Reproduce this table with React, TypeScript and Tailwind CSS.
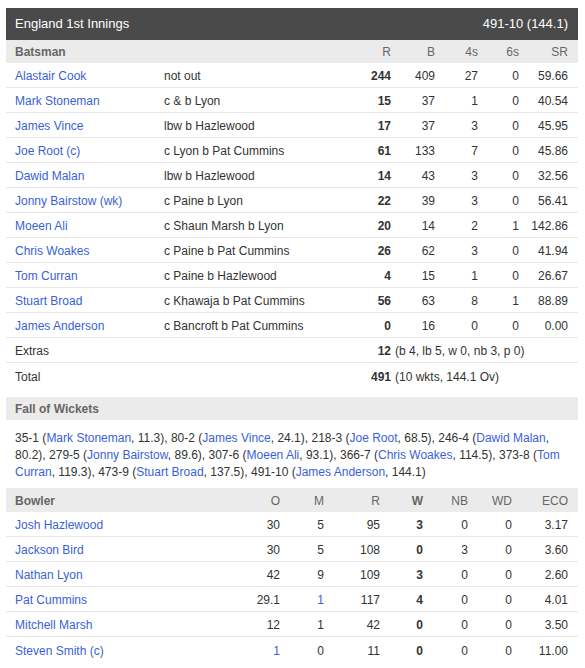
import React from "react";

const batsmen = [
  ["Alastair Cook", "not out", "244", "409", "27", "0", "59.66"],
  ["Mark Stoneman", "c & b Lyon", "15", "37", "1", "0", "40.54"],
  ["James Vince", "lbw b Hazlewood", "17", "37", "3", "0", "45.95"],
  ["Joe Root (c)", "c Lyon b Pat Cummins", "61", "133", "7", "0", "45.86"],
  ["Dawid Malan", "lbw b Hazlewood", "14", "43", "3", "0", "32.56"],
  ["Jonny Bairstow (wk)", "c Paine b Lyon", "22", "39", "3", "0", "56.41"],
  ["Moeen Ali", "c Shaun Marsh b Lyon", "20", "14", "2", "1", "142.86"],
  ["Chris Woakes", "c Paine b Pat Cummins", "26", "62", "3", "0", "41.94"],
  ["Tom Curran", "c Paine b Hazlewood", "4", "15", "1", "0", "26.67"],
  ["Stuart Broad", "c Khawaja b Pat Cummins", "56", "63", "8", "1", "88.89"],
  ["James Anderson", "c Bancroft b Pat Cummins", "0", "16", "0", "0", "0.00"],
];

const bowlers = [
  ["Josh Hazlewood", "30", "5", "95", "3", "0", "0", "3.17"],
  ["Jackson Bird", "30", "5", "108", "0", "3", "0", "3.60"],
  ["Nathan Lyon", "42", "9", "109", "3", "0", "0", "2.60"],
  ["Pat Cummins", "29.1", "1", "117", "4", "0", "0", "4.01"],
  ["Mitchell Marsh", "12", "1", "42", "0", "0", "0", "3.50"],
  ["Steven Smith (c)", "1", "0", "11", "0", "0", "0", "11.00"],
];

const fow: [string, string, string][] = [
  ["35-1", "Mark Stoneman", "11.3"],
  ["80-2", "James Vince", "24.1"],
  ["218-3", "Joe Root", "68.5"],
  ["246-4", "Dawid Malan", "80.2"],
  ["279-5", "Jonny Bairstow", "89.6"],
  ["307-6", "Moeen Ali", "93.1"],
  ["366-7", "Chris Woakes", "114.5"],
  ["373-8", "Tom Curran", "119.3"],
  ["473-9", "Stuart Broad", "137.5"],
  ["491-10", "James Anderson", "144.1"],
];

const link = "text-[#3a5fd9]";
const batGrid = "grid grid-cols-[149px_177px_50px_44px_43px_41px_49px] items-center";
const bowlGrid = "grid grid-cols-[215px_50px_44px_56px_43px_45px_44px_56px] items-center";

export default function App() {
  return (
    <div className="bg-white px-[6px] pt-2 font-['Liberation_Sans',Arial,sans-serif] text-[12px] text-[#333]">
      <div className="w-[572px]">
        <div className="flex h-8 items-center justify-between bg-[#4a4a4a] pl-[9px] pr-[10px] text-[13px] text-white">
          <span>England 1st Innings</span>
          <span>491-10 (144.1)</span>
        </div>

        <div className={`${batGrid} h-[23px] bg-[#ebebeb] pl-[9px] pr-[10px] pt-px text-[#666]`}>
          <span className="font-bold">Batsman</span>
          <span></span>
          <span className="text-right">R</span>
          <span className="text-right">B</span>
          <span className="text-right">4s</span>
          <span className="text-right">6s</span>
          <span className="text-right">SR</span>
        </div>
        {batsmen.map((b) => (
          <div key={b[0]} className={`${batGrid} h-[25px] border-b border-[#e6e6e6] pl-[9px] pr-[10px] pt-[2px]`}>
            <span className={link}>{b[0]}</span>
            <span>{b[1]}</span>
            <span className="text-right font-bold">{b[2]}</span>
            <span className="text-right">{b[3]}</span>
            <span className="text-right">{b[4]}</span>
            <span className="text-right">{b[5]}</span>
            <span className="text-right">{b[6]}</span>
          </div>
        ))}
        <div className="flex h-[25px] items-center border-b border-[#e6e6e6] pl-[9px] pr-[10px] pt-[2px]">
          <span className="w-[326px]">Extras</span>
          <span className="w-[50px] text-right font-bold">12</span>
          <span className="pl-1">(b 4, lb 5, w 0, nb 3, p 0)</span>
        </div>
        <div className="flex h-[25px] items-center pl-[9px] pr-[10px] pt-[2px]">
          <span className="w-[326px]">Total</span>
          <span className="w-[50px] text-right font-bold">491</span>
          <span className="pl-1">(10 wkts, 144.1 Ov)</span>
        </div>

        <div className="mt-[9px] flex h-[23px] items-center bg-[#ebebeb] pl-[9px] pt-px font-bold text-[#666]">
          Fall of Wickets
        </div>
        <p className="pb-[7px] pl-[9px] pr-[10px] pt-[10px] leading-[17px]">
          {fow.map(([score, name, over], i) => (
            <React.Fragment key={score}>
              {score} (<span className={link}>{name}</span>, {over})
              {i < fow.length - 1 ? ", " : ""}
            </React.Fragment>
          ))}
        </p>

        <div className={`${bowlGrid} h-[24px] bg-[#ebebeb] pl-[9px] pr-[10px] pt-px text-[#666]`}>
          <span className="font-bold">Bowler</span>
          <span className="text-right">O</span>
          <span className="text-right">M</span>
          <span className="text-right">R</span>
          <span className="text-right font-bold">W</span>
          <span className="text-right">NB</span>
          <span className="text-right">WD</span>
          <span className="text-right">ECO</span>
        </div>
        {bowlers.map((b) => (
          <div key={b[0]} className={`${bowlGrid} h-[25px] border-b border-[#e6e6e6] pl-[9px] pr-[10px] pt-[2px] last:border-b-0`}>
            <span className={link}>{b[0]}</span>
            <span className={`text-right ${b[0] === "Steven Smith (c)" ? link : ""}`}>{b[1]}</span>
            <span className={`text-right ${b[0] === "Pat Cummins" ? link : ""}`}>{b[2]}</span>
            <span className="text-right">{b[3]}</span>
            <span className="text-right font-bold">{b[4]}</span>
            <span className="text-right">{b[5]}</span>
            <span className="text-right">{b[6]}</span>
            <span className="text-right">{b[7]}</span>
          </div>
        ))}
      </div>
    </div>
  );
}
